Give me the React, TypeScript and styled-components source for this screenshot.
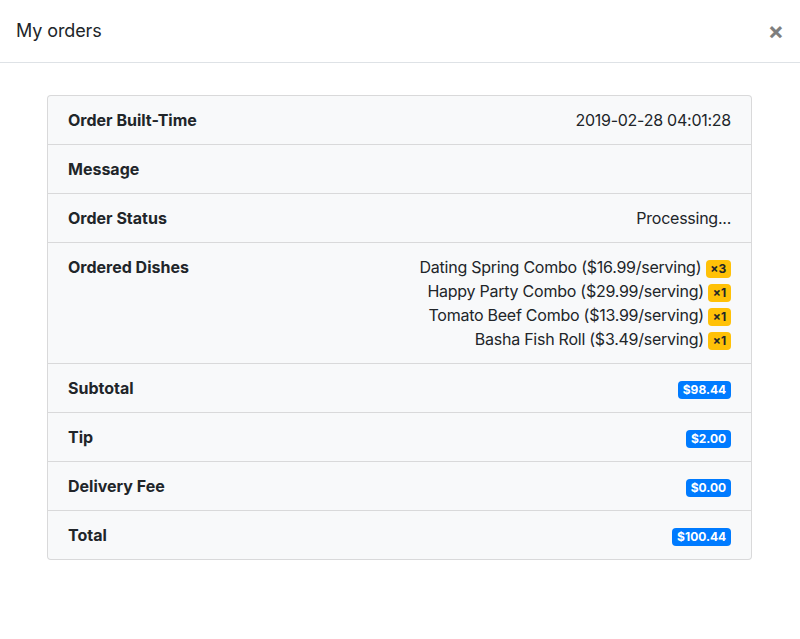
import React from "react";
import styled, { createGlobalStyle } from "styled-components";

const Global = createGlobalStyle`
  html, body { margin: 0; padding: 0; background: #fff; }
  body {
    font-family: Inter, "Noto Sans", "Liberation Sans", sans-serif;
    font-size: 16px;
    line-height: 1.5;
    color: #212529;
  }
  * { box-sizing: border-box; }
`;

const Modal = styled.div`
  width: 800px;
  min-height: 639px;
  background: #fff;
  display: flex;
  flex-direction: column;
`;

const Header = styled.div`
  display: flex;
  align-items: center;
  justify-content: space-between;
  height: 63px;
  padding: 16px;
  border-bottom: 1px solid #dee2e6;
`;

const Title = styled.h5`
  margin: 0;
  font-size: 18px;
  font-weight: 400;
  line-height: 30px;
  letter-spacing: -0.1px;
`;

const Close = styled.button`
  border: 0;
  background: transparent;
  padding: 16px;
  margin: -16px -16px -16px auto;
  font-family: inherit;
  font-size: 24px;
  font-weight: 700;
  line-height: 1;
  color: #000;
  opacity: 0.5;
  text-shadow: 0 1px 0 #fff;
  cursor: pointer;
`;

const Body = styled.div`
  padding: 32px 48px 32px 47px;
`;

const List = styled.ul`
  list-style: none;
  margin: 0;
  padding: 0;
  display: flex;
  flex-direction: column;
`;

const Item = styled.li`
  display: flex;
  justify-content: space-between;
  align-items: flex-start;
  padding: 12px 20px;
  background: #f8f9fa;
  border: 1px solid rgba(0, 0, 0, 0.125);
  margin-bottom: -1px;
  &:first-child {
    border-top-left-radius: 4px;
    border-top-right-radius: 4px;
  }
  &:last-child {
    margin-bottom: 0;
    border-bottom-left-radius: 4px;
    border-bottom-right-radius: 4px;
  }
`;

const Label = styled.strong`
  font-weight: 700;
`;

const Value = styled.div`
  text-align: right;
  letter-spacing: -0.25px;
`;

const Dish = styled.div`
  white-space: nowrap;
`;

const Badge = styled.span<{ $tone: "warning" | "primary" }>`
  display: inline-block;
  padding: 0.25em 0.4em;
  font-size: 75%;
  font-weight: 700;
  line-height: 1;
  letter-spacing: 0;
  text-align: center;
  white-space: nowrap;
  vertical-align: baseline;
  border-radius: 4px;
  color: ${(p) => (p.$tone === "warning" ? "#212529" : "#fff")};
  background: ${(p) => (p.$tone === "warning" ? "#ffc107" : "#007bff")};
`;

const dishes = [
  { name: "Dating Spring Combo", price: "16.99", qty: 3 },
  { name: "Happy Party Combo", price: "29.99", qty: 1 },
  { name: "Tomato Beef Combo", price: "13.99", qty: 1 },
  { name: "Basha Fish Roll", price: "3.49", qty: 1 },
];

export default function App() {
  return (
    <>
      <Global />
      <Modal>
        <Header>
          <Title>My orders</Title>
          <Close aria-label="Close">×</Close>
        </Header>
        <Body>
          <List>
            <Item>
              <Label>Order Built-Time</Label>
              <Value>2019-02-28 04:01:28</Value>
            </Item>
            <Item>
              <Label>Message</Label>
              <Value></Value>
            </Item>
            <Item>
              <Label>Order Status</Label>
              <Value>Processing...</Value>
            </Item>
            <Item>
              <Label>Ordered Dishes</Label>
              <Value>
                {dishes.map((d) => (
                  <Dish key={d.name}>
                    {d.name} (${d.price}/serving){" "}
                    <Badge $tone="warning">×{d.qty}</Badge>
                  </Dish>
                ))}
              </Value>
            </Item>
            <Item>
              <Label>Subtotal</Label>
              <Value>
                <Badge $tone="primary">$98.44</Badge>
              </Value>
            </Item>
            <Item>
              <Label>Tip</Label>
              <Value>
                <Badge $tone="primary">$2.00</Badge>
              </Value>
            </Item>
            <Item>
              <Label>Delivery Fee</Label>
              <Value>
                <Badge $tone="primary">$0.00</Badge>
              </Value>
            </Item>
            <Item>
              <Label>Total</Label>
              <Value>
                <Badge $tone="primary">$100.44</Badge>
              </Value>
            </Item>
          </List>
        </Body>
      </Modal>
    </>
  );
}
